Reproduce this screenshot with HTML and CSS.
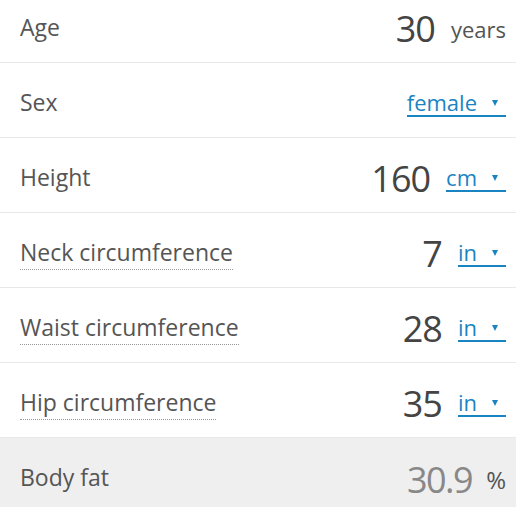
FILE: index.html
```html
<!DOCTYPE html>
<html lang="en">
<head>
  <meta charset="UTF-8" />
  <meta name="viewport" content="width=device-width, initial-scale=1" />
  <title>Body fat calculator</title>
  <link rel="stylesheet" href="styles.css">
</head>
<body>
  <div class="calc">
    <div class="row">
      <span class="label">Age</span>
      <span class="value"><span class="num">30</span><span class="unit">years</span></span>
    </div>
    <div class="row">
      <span class="label">Sex</span>
      <span class="value"><a class="select">female<span class="arrow"></span></a></span>
    </div>
    <div class="row">
      <span class="label">Height</span>
      <span class="value"><span class="num">160</span><a class="select">cm<span class="arrow"></span></a></span>
    </div>
    <div class="row">
      <span class="label hint">Neck circumference</span>
      <span class="value"><span class="num">7</span><a class="select">in<span class="arrow"></span></a></span>
    </div>
    <div class="row">
      <span class="label hint">Waist circumference</span>
      <span class="value"><span class="num">28</span><a class="select">in<span class="arrow"></span></a></span>
    </div>
    <div class="row">
      <span class="label hint">Hip circumference</span>
      <span class="value"><span class="num">35</span><a class="select">in<span class="arrow"></span></a></span>
    </div>
    <div class="row result">
      <span class="label">Body fat</span>
      <span class="value"><span class="num">30.9</span><span class="unit">%</span></span>
    </div>
  </div>
</body>
</html>
```

FILE: styles.css
```css
body {
  margin: 0;
  font-family: "Open Sans", "Noto Sans", sans-serif;
  background: white;
  color: #555;
  overflow: hidden;
}
.calc {
  margin-top: -12px;
}
.row {
  box-sizing: border-box;
  display: flex;
  justify-content: space-between;
  align-items: center;
  height: 75px;
  padding: 4px 10px 0 20px;
  border-bottom: 1px solid #e8e8e8;
  line-height: 1;
}
.label {
  font-size: 23px;
  color: #555;
}
.label.hint {
  border-bottom: 1px dotted #999;
  padding-bottom: 5px;
  margin-top: 6px;
}
.value {
  display: flex;
  align-items: center;
  margin-top: 4px;
}
.num {
  font-size: 36px;
  letter-spacing: -1px;
  color: #444;
  margin-right: 16px;
}
.unit {
  font-size: 22px;
  color: #555;
}
.select {
  font-size: 22px;
  color: #1a84c3;
  border-bottom: 2px solid #1a84c3;
  padding-bottom: 2px;
  cursor: pointer;
}
.arrow {
  display: inline-block;
  width: 0;
  height: 0;
  border-left: 3px solid transparent;
  border-right: 3px solid transparent;
  border-top: 6px solid #1a84c3;
  margin: 0 8px 0 15px;
  vertical-align: 5px;
}
.result {
  background: #efefef;
  border-bottom: none;
}
.result .num {
  color: #888;
  letter-spacing: -1.5px;
  margin-right: 14px;
}
.result .unit {
  font-size: 24px;
}
```
